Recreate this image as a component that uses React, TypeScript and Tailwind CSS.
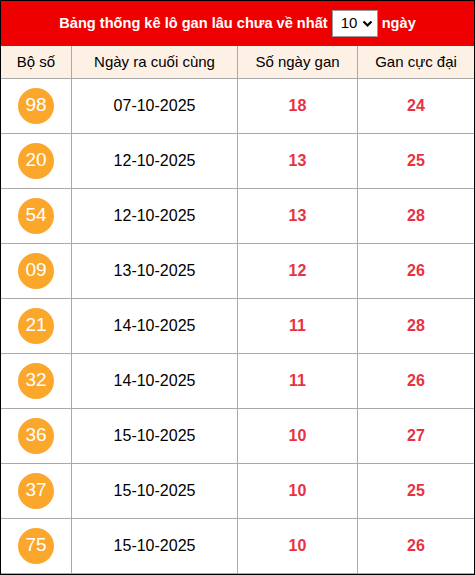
import React from "react";

const rows = [
  ["98", "07-10-2025", "18", "24"],
  ["20", "12-10-2025", "13", "25"],
  ["54", "12-10-2025", "13", "28"],
  ["09", "13-10-2025", "12", "26"],
  ["21", "14-10-2025", "11", "28"],
  ["32", "14-10-2025", "11", "26"],
  ["36", "15-10-2025", "10", "27"],
  ["37", "15-10-2025", "10", "25"],
  ["75", "15-10-2025", "10", "26"],
];

export default function App() {
  return (
    <div
      className="w-[475px] h-[575px] border border-black bg-white overflow-hidden"
      style={{ fontFamily: '"Liberation Sans", Arial, sans-serif' }}
    >
      <div className="h-[45px] bg-[#ee0000] flex items-center justify-center gap-[4px] text-white font-bold text-[14.6px]">
        <span>Bảng thống kê lô gan lâu chưa về nhất</span>
        <div className="w-[46px] h-[27px] bg-white border border-[#999] flex items-center justify-between pl-[8px] pr-[4px] text-black font-normal text-[15px]">
          <span>10</span>
          <svg width="11" height="8" viewBox="0 0 11 8">
            <path d="M1.5 1.5 L5.5 5.5 L9.5 1.5" stroke="black" strokeWidth="2.2" fill="none" />
          </svg>
        </div>
        <span>ngày</span>
      </div>
      <table className="w-[474px] border-collapse table-fixed -ml-px">
        <colgroup>
          <col className="w-[71px]" />
          <col className="w-[166px]" />
          <col className="w-[120px]" />
          <col className="w-[117px]" />
        </colgroup>
        <thead>
          <tr className="h-[32px] bg-[#fdf1e6]">
            {["Bộ số", "Ngày ra cuối cùng", "Số ngày gan", "Gan cực đại"].map((h) => (
              <th key={h} className="border border-[#aaaaaa] border-t-0 font-normal text-[15px] text-black text-center">
                {h}
              </th>
            ))}
          </tr>
        </thead>
        <tbody>
          {rows.map((r) => (
            <tr key={r[0]} className="h-[55px]">
              <td className="border border-[#aaaaaa] text-center">
                <div className="mx-auto w-[36px] h-[36px] rounded-full bg-[#fba72c] text-white text-[19px] flex items-center justify-center">
                  {r[0]}
                </div>
              </td>
              <td className="border border-[#aaaaaa] text-center text-[16px] text-black">{r[1]}</td>
              <td className="border border-[#aaaaaa] text-center text-[16px] font-bold text-[#e8323f]">{r[2]}</td>
              <td className="border border-[#aaaaaa] text-center text-[16px] font-bold text-[#e8323f]">{r[3]}</td>
            </tr>
          ))}
        </tbody>
      </table>
    </div>
  );
}
